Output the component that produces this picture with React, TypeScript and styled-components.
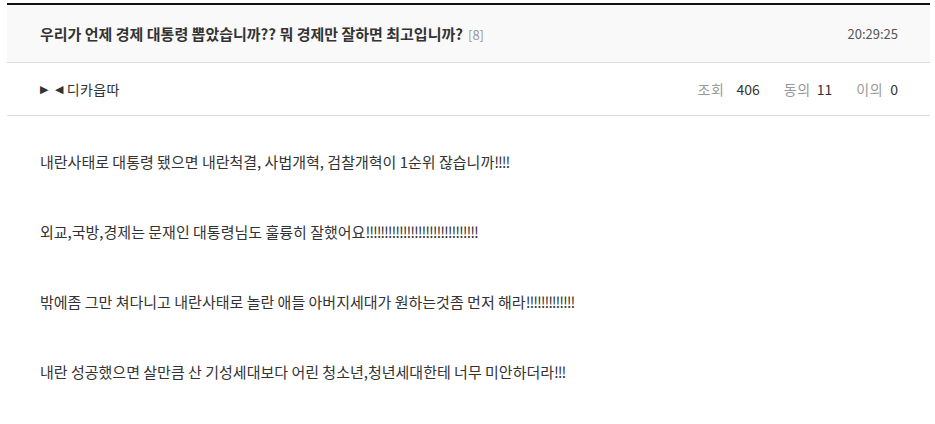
import React from "react";
import styled, { createGlobalStyle } from "styled-components";

const GlobalStyle = createGlobalStyle`
  html, body {
    margin: 0;
    padding: 0;
    background: #fff;
  }
  body {
    font-family: "Noto Sans CJK KR", "Noto Sans", sans-serif;
    color: #333;
  }
`;

const Wrap = styled.div`
  margin: 3px 5px 0 7px;
  border-top: 2px solid #111;
`;

const TitleBar = styled.div`
  display: flex;
  align-items: center;
  justify-content: space-between;
  height: 57px;
  padding: 0 32px 0 33px;
  background: #f9f9f9;
  border-bottom: 1px solid #ddd;
`;

const Title = styled.h1`
  margin: 0;
  font-size: 15px;
  font-weight: bold;
  color: #333;
`;

const Count = styled.span`
  margin-left: 5px;
  font-size: 13px;
  font-weight: normal;
  color: #999;
`;

const Time = styled.span`
  font-size: 13px;
  color: #555;
`;

const InfoBar = styled.div`
  display: flex;
  align-items: center;
  justify-content: space-between;
  height: 52px;
  padding: 0 32px 0 33px;
  border-bottom: 1px solid #ddd;
`;

const Author = styled.span`
  display: flex;
  align-items: center;
  font-size: 14px;
  letter-spacing: 0.4px;
  color: #333;
`;

const Mark = styled.span<{ $gap: number }>`
  font-family: "DejaVu Sans", sans-serif;
  font-size: 11px;
  margin-right: ${(p) => p.$gap}px;
`;

const Stats = styled.div`
  display: flex;
  gap: 24px;
  font-size: 14px;
`;

const Stat = styled.span<{ $gap: number }>`
  display: flex;
  gap: ${(p) => p.$gap}px;
`;

const Label = styled.span`
  color: #999;
  letter-spacing: 0.6px;
`;

const Value = styled.span`
  color: #333;
`;

const Body = styled.div`
  padding: 35px 33px 0;
  display: flex;
  flex-direction: column;
  gap: 48px;
`;

const Para = styled.p`
  margin: 0;
  font-size: 15px;
  line-height: 22px;
  color: #333;
`;

const Bang = styled.span`
  letter-spacing: -1.1px;
`;

const paragraphs: [string, string][] = [
  ["내란사태로 대통령 됐으면 내란척결, 사법개혁, 검찰개혁이 1순위 잖습니까", "!!!!"],
  ["외교,국방,경제는 문재인 대통령님도 훌륭히 잘했어요", "!!!!!!!!!!!!!!!!!!!!!!!!!!!!!!"],
  ["밖에좀 그만 쳐다니고 내란사태로 놀란 애들 아버지세대가 원하는것좀 먼저 해라", "!!!!!!!!!!!!!"],
  ["내란 성공했으면 살만큼 산 기성세대보다 어린 청소년,청년세대한테 너무 미안하더라", "!!!"],
];

const stats = [
  { label: "조회", value: "406", gap: 12 },
  { label: "동의", value: "11", gap: 6 },
  { label: "이의", value: "0", gap: 7 },
];

export default function App() {
  return (
    <Wrap>
      <GlobalStyle />
      <TitleBar>
        <Title>
          우리가 언제 경제 대통령 뽑았습니까?? 뭐 경제만 잘하면 최고입니까?
          <Count>[8]</Count>
        </Title>
        <Time>20:29:25</Time>
      </TitleBar>
      <InfoBar>
        <Author>
          <Mark $gap={6}>▶</Mark>
          <Mark $gap={3}>◀</Mark>
          디카읍따
        </Author>
        <Stats>
          {stats.map((s) => (
            <Stat key={s.label} $gap={s.gap}>
              <Label>{s.label}</Label>
              <Value>{s.value}</Value>
            </Stat>
          ))}
        </Stats>
      </InfoBar>
      <Body>
        {paragraphs.map(([text, bang]) => (
          <Para key={text}>
            {text}
            <Bang>{bang}</Bang>
          </Para>
        ))}
      </Body>
    </Wrap>
  );
}
